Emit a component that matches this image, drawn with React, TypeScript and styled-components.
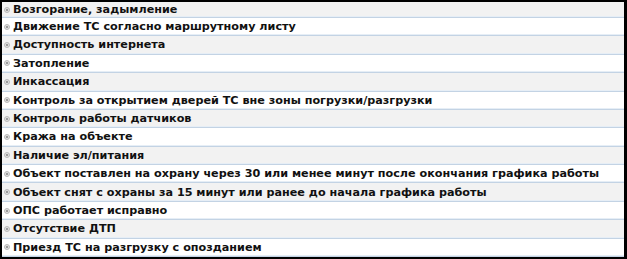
import styled, { createGlobalStyle } from "styled-components";

const GlobalStyle = createGlobalStyle`
  html, body {
    margin: 0;
    padding: 0;
    background: #ffffff;
  }
`;

const items = [
  "Возгорание, задымление",
  "Движение ТС согласно маршрутному листу",
  "Доступность интернета",
  "Затопление",
  "Инкассация",
  "Контроль за открытием дверей ТС вне зоны погрузки/разгрузки",
  "Контроль работы датчиков",
  "Кража на объекте",
  "Наличие эл/питания",
  "Объект поставлен на охрану через 30 или менее минут после окончания графика работы",
  "Объект снят с охраны за 15 минут или ранее до начала графика работы",
  "ОПС работает исправно",
  "Отсутствие ДТП",
  "Приезд ТС на разгрузку с опозданием",
];

export default function App() {
  return (
    <>
      <GlobalStyle />
      <Frame>
        {items.map((text, i) => (
          <Row key={text} $shaded={i % 2 === 0}>
            <Bullet />
            <Label>{text}</Label>
          </Row>
        ))}
      </Frame>
    </>
  );
}

const Frame = styled.div`
  box-sizing: border-box;
  width: 627px;
  height: 259px;
  border-top: 2px solid #000;
  border-left: 2px solid #000;
  border-right: 3px solid #000;
  border-bottom: 2px solid #000;
  display: grid;
  grid-template-rows: 16px repeat(13, 1fr);
  background: #fff;
`;

const Row = styled.div<{ $shaded: boolean }>`
  display: flex;
  align-items: center;
  gap: 3px;
  padding-left: 2px;
  background: ${(p) => (p.$shaded ? "#f2f2f2" : "#ffffff")};
  border-bottom: 1px solid #c3d3e4;
  box-shadow: inset 0 -1px 0 #e6eef6;
  min-height: 0;
`;

const Bullet = styled.span`
  box-sizing: border-box;
  width: 6px;
  height: 6px;
  border-radius: 50%;
  border: 1px solid #b8b8b8;
  background: radial-gradient(circle, #9a9a9a 0 1px, #e0e0e0 1.5px);
  flex: none;
`;

const Label = styled.span`
  font-family: "DejaVu Sans", sans-serif;
  font-weight: bold;
  font-size: 11.2px;
  color: #111;
  white-space: nowrap;
  line-height: 1;
`;
